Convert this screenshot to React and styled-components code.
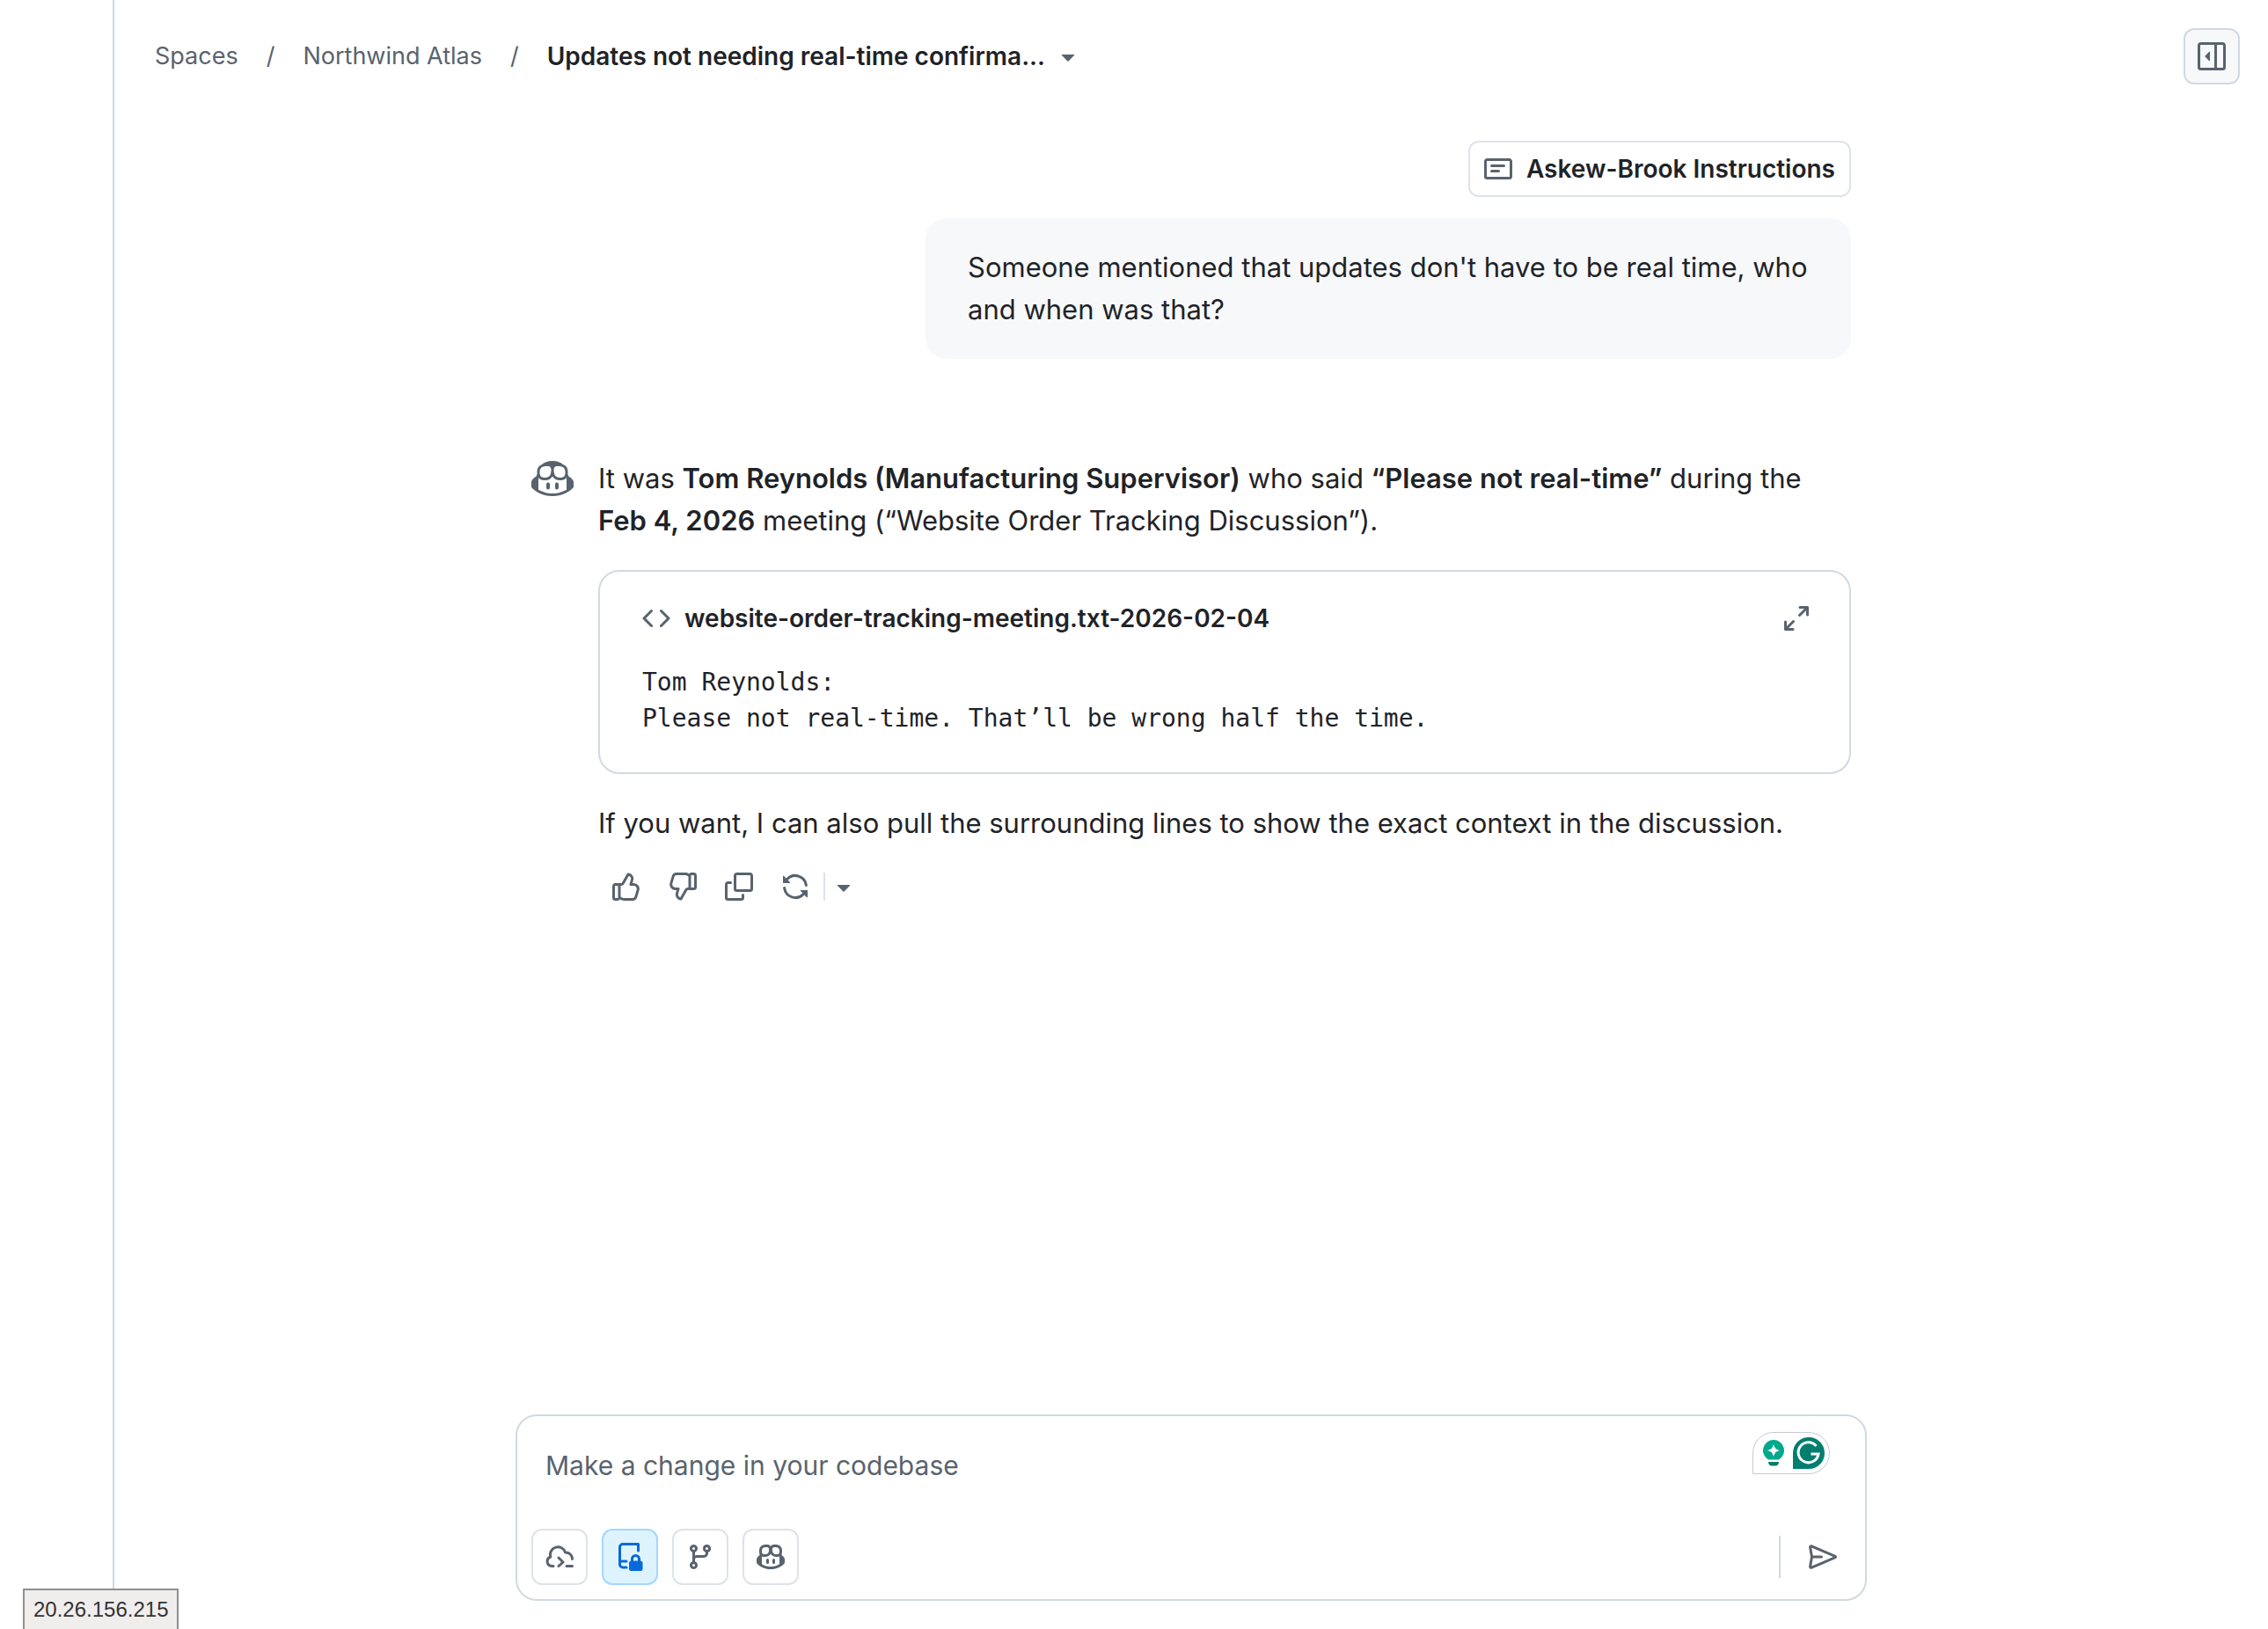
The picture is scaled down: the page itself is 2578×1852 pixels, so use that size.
import React from "react";
import styled, { createGlobalStyle } from "styled-components";

const sans = `Inter, "Liberation Sans", sans-serif`;
const mono = `"DejaVu Sans Mono", "Liberation Mono", monospace`;
const ink = "#1f2328";
const muted = "#59636e";
const line = "#d1d9e0";
const lineSoft = "#dee3e8";

const GlobalStyle = createGlobalStyle`
  *, *::before, *::after { box-sizing: border-box; }
  body { margin: 0; background: #fff; color: ${ink}; font-family: ${sans}; font-size: 31px; line-height: 48px; }
  button, input { font: inherit; color: inherit; }
  p, pre, h1, h2, ol { margin: 0; padding: 0; }
  strong { font-weight: 600; }
`;

const Page = styled.div`
  display: flex;
  min-height: 100vh;
`;

const Rail = styled.aside`
  flex: none;
  width: 130px;
  border-right: 2px solid ${line};
`;

const Main = styled.main`
  flex: 1;
  min-width: 0;
  display: flex;
  flex-direction: column;
  padding: 32px;
`;

const Header = styled.header`
  display: flex;
  align-items: center;
  justify-content: space-between;
  height: 64px;
  padding-left: 14px;
`;

const Crumbs = styled.ol`
  display: flex;
  align-items: center;
  list-style: none;
  font-size: 27px;
`;

const Crumb = styled.li`
  display: flex;
  align-items: center;
  & + &::before {
    content: "/";
    color: ${muted};
    margin: 0 32px;
  }
`;

const CrumbLink = styled.a`
  color: ${muted};
  text-decoration: none;
`;

const TitleButton = styled.button`
  display: flex;
  align-items: center;
  gap: 10px;
  padding: 0;
  border: 0;
  background: none;
  font-size: 28px;
  font-weight: 600;
  svg { color: ${muted}; }
`;

const SquareButton = styled.button`
  display: grid;
  place-items: center;
  width: 64px;
  height: 64px;
  padding: 0;
  border: 2px solid ${(p) => (p.$active ? "#a5d6ff" : p.$filled ? line : lineSoft)};
  border-radius: 12px;
  background: ${(p) => (p.$active ? "#ddf4ff" : p.$filled ? "#f6f8fa" : "#fff")};
  color: ${(p) => (p.$active ? "#0969da" : muted)};
`;

const PlainButton = styled.button`
  display: grid;
  place-items: center;
  width: ${(p) => p.$width || 64}px;
  height: 64px;
  padding: 0;
  border: 0;
  background: none;
  color: ${muted};
`;

const Svg = styled.svg`
  flex: none;
  display: block;
  fill: currentColor;
`;

const Thread = styled.section`
  flex: 1;
  display: flex;
  flex-direction: column;
  width: 100%;
  max-width: 1500px;
  margin: 0 auto;
  padding: 64px 0 32px;
`;

const UserTurn = styled.div`
  display: flex;
  flex-direction: column;
  align-items: flex-end;
  gap: 24px;
`;

const Attachment = styled.button`
  display: flex;
  align-items: center;
  gap: 16px;
  height: 64px;
  padding: 0 16px;
  border: 2px solid ${lineSoft};
  border-radius: 12px;
  background: #fff;
  font-size: 28px;
  font-weight: 600;
  svg { color: ${muted}; }
`;

const Bubble = styled.p`
  width: 75%;
  max-width: 1052px;
  padding: 32px 40px 32px 48px;
  border-radius: 24px;
  background: #f6f8fa;
`;

const Reply = styled.article`
  display: flex;
  gap: 28px;
  margin-top: 112px;
`;

const Avatar = styled.div`
  flex: none;
  height: 48px;
  color: ${muted};
`;

const ReplyBody = styled.div`
  flex: 1;
  min-width: 0;
`;

const FileCard = styled.section`
  margin: 32px 0;
  padding: 37px 44px 41px 48px;
  border: 2px solid ${line};
  border-radius: 24px;
`;

const FileHead = styled.div`
  display: flex;
  align-items: center;
  justify-content: space-between;
  height: 32px;
`;

const FileName = styled.h2`
  display: flex;
  align-items: center;
  gap: 16px;
  font-size: 28px;
  font-weight: 600;
  svg { color: ${muted}; }
`;

const ExpandButton = styled.button`
  padding: 0;
  border: 0;
  background: none;
  color: ${muted};
`;

const Code = styled.pre`
  margin-top: 36px;
  font-family: ${mono};
  font-size: 28px;
  line-height: 41px;
  overflow: hidden;
`;

const Actions = styled.div`
  display: flex;
  align-items: center;
  margin-top: 16px;
`;

const Divider = styled.span`
  width: 2px;
  height: ${(p) => p.$height}px;
  background: ${(p) => p.$color};
`;

const Composer = styled.form`
  width: 100%;
  max-width: 1536px;
  margin: 0 auto;
  padding: 16px;
  border: 2px solid ${line};
  border-radius: 24px;
  display: flex;
  flex-direction: column;
  gap: 32px;
`;

const PromptRow = styled.div`
  display: flex;
  align-items: flex-start;
  justify-content: space-between;
  height: 80px;
  padding: 2px 24px 0 16px;
`;

const Prompt = styled.input`
  flex: 1;
  min-width: 0;
  height: 76px;
  padding: 0;
  border: 0;
  outline: 0;
  background: none;
  font-size: 30px;
  &::placeholder { color: ${muted}; opacity: 1; }
`;

const Helper = styled.div`
  display: flex;
  align-items: center;
  gap: 10px;
  width: 88px;
  height: 48px;
  padding-left: 11px;
  border: 1px solid #c8c8da;
  border-radius: 24px 24px 24px 0;
`;

const ToolRow = styled.div`
  display: flex;
  align-items: center;
  justify-content: space-between;
`;

const Tools = styled.div`
  display: flex;
  align-items: center;
  gap: 16px;
`;

const HostTag = styled.div`
  position: fixed;
  left: 26px;
  bottom: 0;
  height: 46px;
  padding: 0 10px;
  border: 2px solid #8f8f8f;
  border-bottom: 0;
  background: #f0eded;
  color: #333;
  font-family: "Liberation Sans", Arial, sans-serif;
  font-size: 24px;
  line-height: 44px;
`;

const paths = {
  sidebar: ["m4.177 7.823 2.396-2.396A.25.25 0 0 1 7 5.604v4.792a.25.25 0 0 1-.427.177L4.177 8.177a.25.25 0 0 1 0-.354Z", "M0 1.75C0 .784.784 0 1.75 0h12.5C15.216 0 16 .784 16 1.75v12.5A1.75 1.75 0 0 1 14.25 16H1.75A1.75 1.75 0 0 1 0 14.25Zm1.75-.25a.25.25 0 0 0-.25.25v12.5c0 .138.112.25.25.25H9.5v-13Zm12.5 13a.25.25 0 0 0 .25-.25V1.75a.25.25 0 0 0-.25-.25H11v13Z"],
  note: ["M0 3.75C0 2.784.784 2 1.75 2h12.5c.966 0 1.75.784 1.75 1.75v8.5A1.75 1.75 0 0 1 14.25 14H1.75A1.75 1.75 0 0 1 0 12.25Zm1.75-.25a.25.25 0 0 0-.25.25v8.5c0 .138.112.25.25.25h12.5a.25.25 0 0 0 .25-.25v-8.5a.25.25 0 0 0-.25-.25ZM3.5 6.25a.75.75 0 0 1 .75-.75h7a.75.75 0 0 1 0 1.5h-7a.75.75 0 0 1-.75-.75Zm.75 2.25h4a.75.75 0 0 1 0 1.5h-4a.75.75 0 0 1 0-1.5Z"],
  caret: ["m4.427 7.427 3.396 3.396a.25.25 0 0 0 .354 0l3.396-3.396A.25.25 0 0 0 11.396 7H4.604a.25.25 0 0 0-.177.427Z"],
  code: ["m11.28 3.22 4.25 4.25a.75.75 0 0 1 0 1.06l-4.25 4.25a.749.749 0 0 1-1.275-.326.749.749 0 0 1 .215-.734L13.94 8l-3.72-3.72a.749.749 0 0 1 .326-1.275.749.749 0 0 1 .734.215Zm-6.56 0a.751.751 0 0 1 1.042.018.751.751 0 0 1 .018 1.042L2.06 8l3.72 3.72a.749.749 0 0 1-.326 1.275.749.749 0 0 1-.734-.215L.47 8.53a.75.75 0 0 1 0-1.06Z"],
  up: ["M8.347.631A.75.75 0 0 1 9.123.26l.238.04a3.25 3.25 0 0 1 2.591 4.098L11.494 6h.665a3.25 3.25 0 0 1 3.118 4.167l-1.135 3.859A2.751 2.751 0 0 1 11.503 16H6.586a3.75 3.75 0 0 1-2.184-.702A1.75 1.75 0 0 1 3 16H1.75A1.75 1.75 0 0 1 0 14.25v-6.5C0 6.784.784 6 1.75 6h3.417a.25.25 0 0 0 .217-.127ZM4.75 13.649l.396.33c.404.337.914.521 1.44.521h4.917a1.25 1.25 0 0 0 1.2-.897l1.135-3.859A1.75 1.75 0 0 0 12.159 7.5H10.5a.75.75 0 0 1-.721-.956l.731-2.558a1.75 1.75 0 0 0-1.127-2.14L6.69 6.611a1.75 1.75 0 0 1-1.523.889H4.75ZM3.25 7.5h-1.5a.25.25 0 0 0-.25.25v6.5c0 .138.112.25.25.25H3a.25.25 0 0 0 .25-.25Z"],
  down: ["M7.653 15.369a.75.75 0 0 1-.776.371l-.238-.04a3.25 3.25 0 0 1-2.591-4.099L4.506 10h-.665A3.25 3.25 0 0 1 .723 5.833l1.135-3.859A2.75 2.75 0 0 1 4.482 0H9.43c.78.003 1.538.25 2.168.702A1.752 1.752 0 0 1 12.989 0h1.272A1.75 1.75 0 0 1 16 1.75v6.5A1.75 1.75 0 0 1 14.25 10h-3.417a.25.25 0 0 0-.217.127ZM11.25 2.351l-.396-.33a2.248 2.248 0 0 0-1.44-.521H4.496a1.25 1.25 0 0 0-1.199.897L2.162 6.256A1.75 1.75 0 0 0 3.841 8.5H5.5a.75.75 0 0 1 .721.956l-.731 2.558a1.75 1.75 0 0 0 1.127 2.14L9.31 9.389a1.75 1.75 0 0 1 1.523-.889h.417Zm1.5 6.149h1.5a.25.25 0 0 0 .25-.25v-6.5a.25.25 0 0 0-.25-.25H13a.25.25 0 0 0-.25.25Z"],
  copy: ["M0 6.75C0 5.784.784 5 1.75 5h1.5a.75.75 0 0 1 0 1.5h-1.5a.25.25 0 0 0-.25.25v7.5c0 .138.112.25.25.25h7.5a.25.25 0 0 0 .25-.25v-1.5a.75.75 0 0 1 1.5 0v1.5A1.75 1.75 0 0 1 9.25 16h-7.5A1.75 1.75 0 0 1 0 14.25Z", "M5 1.75C5 .784 5.784 0 6.75 0h7.5C15.216 0 16 .784 16 1.75v7.5A1.75 1.75 0 0 1 14.25 11h-7.5A1.75 1.75 0 0 1 5 9.25Zm1.75-.25a.25.25 0 0 0-.25.25v7.5c0 .138.112.25.25.25h7.5a.25.25 0 0 0 .25-.25v-7.5a.25.25 0 0 0-.25-.25Z"],
  sync: ["M1.705 8.005a.75.75 0 0 1 .834.656 5.5 5.5 0 0 0 9.592 2.97l-1.204-1.204a.25.25 0 0 1 .177-.427h3.646a.25.25 0 0 1 .25.25v3.646a.25.25 0 0 1-.427.177l-1.38-1.38A7.002 7.002 0 0 1 1.05 8.84a.75.75 0 0 1 .656-.834ZM8 2.5a5.487 5.487 0 0 0-4.131 1.869l1.204 1.204A.25.25 0 0 1 4.896 6H1.25A.25.25 0 0 1 1 5.75V2.104a.25.25 0 0 1 .427-.177l1.38 1.38A7.002 7.002 0 0 1 14.95 7.16a.75.75 0 0 1-1.49.178A5.5 5.5 0 0 0 8 2.5Z"],
  branch: ["M9.5 3.25a2.25 2.25 0 1 1 3 2.122V6A2.5 2.5 0 0 1 10 8.5H6a1 1 0 0 0-1 1v1.128a2.251 2.251 0 1 1-1.5 0V5.372a2.25 2.25 0 1 1 1.5 0v1.836A2.493 2.493 0 0 1 6 7h4a1 1 0 0 0 1-1v-.628A2.25 2.25 0 0 1 9.5 3.25Zm-6 0a.75.75 0 1 0 1.5 0 .75.75 0 0 0-1.5 0Zm8.25-.75a.75.75 0 1 0 0 1.5.75.75 0 0 0 0-1.5ZM4.25 12a.75.75 0 1 0 0 1.5.75.75 0 0 0 0-1.5Z"],
  plane: ["M.989 8 .064 2.68a1.342 1.342 0 0 1 1.85-1.462l13.402 5.744a1.13 1.13 0 0 1 0 2.076L1.913 14.782a1.343 1.343 0 0 1-1.85-1.463L.99 8Zm.603-5.288L2.38 7.25h4.87a.75.75 0 0 1 0 1.5H2.38l-.788 4.538L13.929 8Z"],
  copilot: ["M7.998 15.035c-4.562 0-7.873-2.914-7.998-3.749V9.338c.085-.628.677-1.686 1.588-2.065.013-.07.024-.143.036-.218.029-.183.06-.384.126-.612-.201-.508-.254-1.084-.254-1.656 0-.87.128-1.769.693-2.484.579-.733 1.494-1.124 2.724-1.261 1.206-.134 2.262.034 2.944.765.05.053.096.108.139.165.044-.057.094-.112.143-.165.682-.731 1.738-.899 2.944-.765 1.23.137 2.145.528 2.724 1.261.566.715.693 1.614.693 2.484 0 .572-.053 1.148-.254 1.656.066.228.098.429.126.612.012.076.024.148.037.218.924.385 1.522 1.471 1.591 2.095v1.872c0 .766-3.351 3.795-8.002 3.795Zm0-1.485c2.28 0 4.584-1.11 5.002-1.433V7.862l-.023-.116c-.49.21-1.075.291-1.727.291-1.146 0-2.059-.327-2.71-.991A3.222 3.222 0 0 1 8 6.303a3.24 3.24 0 0 1-.544.743c-.65.664-1.563.991-2.71.991-.652 0-1.236-.081-1.727-.291l-.023.116v4.255c.419.323 2.722 1.433 5.002 1.433ZM6.762 2.83c-.193-.206-.637-.413-1.682-.297-1.019.113-1.479.404-1.713.7-.247.312-.369.789-.369 1.554 0 .793.129 1.171.308 1.371.162.181.519.379 1.442.379.853 0 1.339-.235 1.638-.54.315-.322.527-.827.617-1.553.117-.935-.037-1.395-.241-1.614Zm4.155-.297c-1.044-.116-1.488.091-1.681.297-.204.219-.359.679-.242 1.614.091.726.303 1.231.618 1.553.299.305.784.54 1.638.54.922 0 1.28-.198 1.442-.379.179-.2.308-.578.308-1.371 0-.765-.123-1.242-.37-1.554-.233-.296-.693-.587-1.713-.7Z", "M6.25 9.037a.75.75 0 0 1 .75.75v1.501a.75.75 0 0 1-1.5 0V9.787a.75.75 0 0 1 .75-.75Zm4.25.75v1.501a.75.75 0 0 1-1.5 0V9.787a.75.75 0 0 1 1.5 0Z"],
};

const Icon = ({ name, size = 32 }) => (
  <Svg viewBox="0 0 16 16" width={size} height={size} aria-hidden="true">
    {paths[name].map((d) => <path key={d} d={d} />)}
  </Svg>
);

const CopilotAvatarIcon = () => (
  <Svg viewBox="0 0 24 24" width="48" height="48" aria-hidden="true">
    <path d="M23.922 16.992c-.861 1.495-5.859 5.023-11.922 5.023-6.063 0-11.061-3.528-11.922-5.023A.641.641 0 0 1 0 16.736v-2.869a.841.841 0 0 1 .053-.22c.372-.935 1.347-2.292 2.605-2.656.167-.429.414-1.055.644-1.517a10.195 10.195 0 0 1-.052-1.086c0-1.331.282-2.499 1.132-3.368.397-.406.89-.717 1.474-.952 1.399-1.136 3.392-2.093 6.122-2.093 2.731 0 4.767.957 6.166 2.093.584.235 1.077.546 1.474.952.85.869 1.132 2.037 1.132 3.368 0 .368-.014.733-.052 1.086.23.462.477 1.088.644 1.517 1.258.364 2.233 1.721 2.605 2.656a.832.832 0 0 1 .053.22v2.869a.641.641 0 0 1-.078.256ZM12.172 11h-.344a4.323 4.323 0 0 1-.355.508C10.703 12.455 9.555 13 7.965 13c-1.725 0-2.989-.359-3.782-1.259a2.005 2.005 0 0 1-.085-.104L4 11.741v6.585c1.435.779 4.514 2.179 8 2.179 3.486 0 6.565-1.4 8-2.179v-6.585l-.098-.104s-.033.045-.085.104c-.793.9-2.057 1.259-3.782 1.259-1.59 0-2.738-.545-3.508-1.492a4.323 4.323 0 0 1-.355-.508Zm.641-2.935c.136 1.057.403 1.913.878 2.497.442.544 1.134.938 2.344.938 1.573 0 2.292-.337 2.657-.751.384-.435.558-1.15.558-2.361 0-1.14-.243-1.847-.705-2.319-.477-.488-1.319-.862-2.824-1.025-1.487-.161-2.192.138-2.533.529-.269.307-.437.808-.438 1.578v.021c0 .265.021.562.063.893Zm-1.626 0c.042-.331.063-.628.063-.894v-.02c-.001-.77-.169-1.271-.438-1.578-.341-.391-1.046-.69-2.533-.529-1.505.163-2.347.537-2.824 1.025-.462.472-.705 1.179-.705 2.319 0 1.211.175 1.926.558 2.361.365.414 1.084.751 2.657.751 1.21 0 1.902-.394 2.344-.938.475-.584.742-1.44.878-2.497Z" />
    <path d="M14.5 14.25a1 1 0 0 1 1 1v2a1 1 0 0 1-2 0v-2a1 1 0 0 1 1-1Zm-5 0a1 1 0 0 1 1 1v2a1 1 0 0 1-2 0v-2a1 1 0 0 1 1-1Z" />
  </Svg>
);

const StrokeSvg = styled(Svg)`
  fill: none;
  stroke: currentColor;
  stroke-width: 1.5;
  stroke-linecap: round;
  stroke-linejoin: round;
`;

const ExpandIcon = () => (
  <StrokeSvg viewBox="0 0 16 16" width="32" height="32" aria-hidden="true">
    <path d="M10 1.75h4.25V6M14 2 9.75 6.25M6 14.25H1.75V10M2 14l4.25-4.25" />
  </StrokeSvg>
);

const CloudIcon = () => (
  <StrokeSvg viewBox="0 0 16 16" width="32" height="32" aria-hidden="true">
    <path d="M4.5 13.25H3.5A2.7 2.7 0 0 1 2.9 8 4.3 4.3 0 0 1 11.3 5.5 3.7 3.7 0 0 1 15.25 9.25M7.5 8.5 10 11 7.5 13.25M12 13.25h3.25" />
  </StrokeSvg>
);

const RepoLockedIcon = () => (
  <StrokeSvg viewBox="0 0 16 16" width="32" height="32" aria-hidden="true">
    <path d="M12.75 4.5V.75H4A1.75 1.75 0 0 0 2.25 2.5v9.75A1.75 1.75 0 0 0 4 14h2M2.5 10.5H6" />
    <path d="M9.25 11V9.25a2 2 0 0 1 4 0V11" />
    <rect x="8.25" y="11" width="6.25" height="4.25" rx=".5" fill="currentColor" />
  </StrokeSvg>
);

const BulbIcon = () => (
  <Svg viewBox="0 0 24 30" width="24" height="30" aria-hidden="true">
    <path fill="#00a98c" d="M12 0a12 12 0 0 0-6 22.4h12A12 12 0 0 0 12 0Z" />
    <path fill="#fff" d="M12 5c1.2 4.4 2.6 5.8 7 7-4.4 1.2-5.8 2.6-7 7-1.2-4.4-2.6-5.8-7-7 4.4-1.2 5.8-2.6 7-7Z" />
    <path fill="#027e6f" d="M6 25h12c0 2.5-1.5 4.5-4 4.5h-4c-2.5 0-4-2-4-4.5Z" />
  </Svg>
);

const GIcon = () => (
  <Svg viewBox="0 0 36 36" width="36" height="36" aria-hidden="true">
    <path fill="#027e6f" d="M18 0a18 18 0 1 1 0 36H0V18A18 18 0 0 1 18 0Z" />
    <path fill="none" stroke="#fff" strokeWidth="3" d="M26.5 10A11.5 11.5 0 1 0 29 19H20.5" />
  </Svg>
);

export default function App() {
  return (
    <Page>
      <GlobalStyle />
      <Rail />
      <Main>
        <Header>
          <nav aria-label="Breadcrumb">
            <Crumbs>
              <Crumb><CrumbLink href="#spaces">Spaces</CrumbLink></Crumb>
              <Crumb><CrumbLink href="#atlas">Northwind Atlas</CrumbLink></Crumb>
              <Crumb>
                <TitleButton type="button">
                  Updates not needing real-time confirma...
                  <Icon name="caret" />
                </TitleButton>
              </Crumb>
            </Crumbs>
          </nav>
          <SquareButton type="button" $filled aria-label="Open side panel"><Icon name="sidebar" /></SquareButton>
        </Header>

        <Thread>
          <UserTurn>
            <Attachment type="button"><Icon name="note" />Askew-Brook Instructions</Attachment>
            <Bubble>Someone mentioned that updates don't have to be real time, who and when was that?</Bubble>
          </UserTurn>

          <Reply>
            <Avatar><CopilotAvatarIcon /></Avatar>
            <ReplyBody>
              <p>
                It was <strong>Tom Reynolds (Manufacturing Supervisor)</strong> who said{" "}
                <strong>“Please not real-time”</strong> during the <strong>Feb 4, 2026</strong> meeting
                (“Website Order Tracking Discussion”).
              </p>
              <FileCard>
                <FileHead>
                  <FileName><Icon name="code" />website-order-tracking-meeting.txt-2026-02-04</FileName>
                  <ExpandButton type="button" aria-label="Expand file"><ExpandIcon /></ExpandButton>
                </FileHead>
                <Code>{"Tom Reynolds:\nPlease not real-time. That’ll be wrong half the time."}</Code>
              </FileCard>
              <p>If you want, I can also pull the surrounding lines to show the exact context in the discussion.</p>
              <Actions>
                <PlainButton type="button" aria-label="Good response"><Icon name="up" /></PlainButton>
                <PlainButton type="button" aria-label="Bad response"><Icon name="down" /></PlainButton>
                <PlainButton type="button" aria-label="Copy"><Icon name="copy" /></PlainButton>
                <PlainButton type="button" aria-label="Retry"><Icon name="sync" /></PlainButton>
                <Divider $height={32} $color={lineSoft} />
                <PlainButton type="button" $width={42} aria-label="Retry options"><Icon name="caret" /></PlainButton>
              </Actions>
            </ReplyBody>
          </Reply>
        </Thread>

        <Composer onSubmit={(e) => e.preventDefault()}>
          <PromptRow>
            <Prompt type="text" aria-label="Prompt" placeholder="Make a change in your codebase" />
            <Helper><BulbIcon /><GIcon /></Helper>
          </PromptRow>
          <ToolRow>
            <Tools>
              <SquareButton type="button" aria-label="Cloud agent"><CloudIcon /></SquareButton>
              <SquareButton type="button" $active aria-label="Repository"><RepoLockedIcon /></SquareButton>
              <SquareButton type="button" aria-label="Branch"><Icon name="branch" /></SquareButton>
              <SquareButton type="button" aria-label="Copilot"><Icon name="copilot" /></SquareButton>
            </Tools>
            <Tools>
              <Divider $height={48} $color={line} />
              <PlainButton type="submit" aria-label="Send"><Icon name="plane" /></PlainButton>
            </Tools>
          </ToolRow>
        </Composer>
      </Main>
      <HostTag>20.26.156.215</HostTag>
    </Page>
  );
}
